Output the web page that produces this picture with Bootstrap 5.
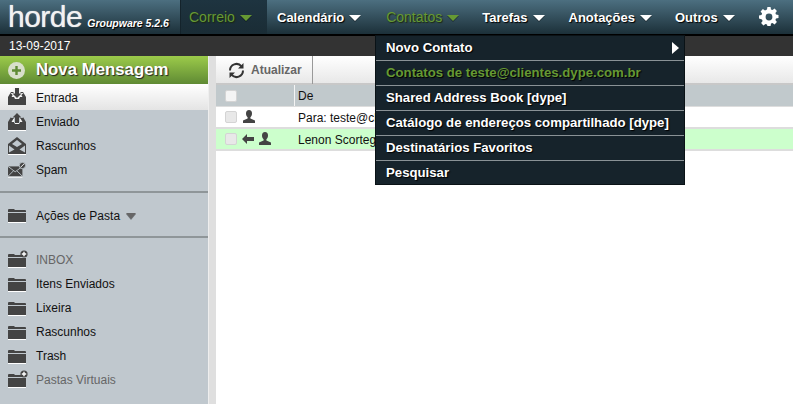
<!DOCTYPE html>
<html lang="pt-BR">
<head>
<meta charset="utf-8">
<title>Horde</title>
<link href="https://cdn.jsdelivr.net/npm/bootstrap@5.3.0/dist/css/bootstrap.min.css" rel="stylesheet">
<style>
html,body{height:404px;overflow:hidden}
body{font-family:"Liberation Sans",Arial,sans-serif;font-size:12px;line-height:1;color:#111;background:#fff;position:relative}
.topbar{height:36px;border-bottom:2px solid #000;background:linear-gradient(#4c6f80,#1c3039)}
.brand{width:180px;height:34px;padding-left:8px}
.brand-word{font-size:30px;font-weight:400;color:#f2f2f2;letter-spacing:-.5px;line-height:34px;height:34px;text-shadow:0 0 1px #ddd}
.brand-ver{font:italic bold 10.5px/11px "Liberation Sans",sans-serif;color:#fff;text-shadow:1px 1px 1px #000;margin:18px 0 0 5px;white-space:nowrap}
.topitem{height:34px;font-size:13px;font-weight:700;color:#fff;text-shadow:1px 1px 1px #000}
.topitem.is-on{color:#669933;text-shadow:1px 1px 1px #1a2a10;font-weight:400;font-size:14px}
.topitem.cur{background:linear-gradient(#1e3440,#1a2c35);width:87px;padding-left:8px;border-left:1px solid #14232b}
.nav-b{margin-left:25px}
.nav-c{margin-left:23px}
.nav-d{margin-left:24px}
.nav-e{margin-left:10px}
.car{width:0;height:0;border-left:6px solid transparent;border-right:6px solid transparent;border-top:6px solid #fff;margin-left:5px;margin-top:1px;filter:drop-shadow(0 1px 0 rgba(0,0,0,.4))}
.is-on .car{border-top-color:#669933}
.car-s{border-top-color:#666;border-left-width:5px;border-right-width:5px;margin-left:-4px}
.gear{margin-left:24px}
.datebar{height:20px;background:#333;color:#fff;padding-left:9px;line-height:20px}
.side{width:208px;height:348px;background:#c0c8ce;flex:none}
.split{width:8px;height:348px;background:#dfdfdf;border-left:1px solid #eee;flex:none}
.compose{height:28px;background:linear-gradient(#9ccb4a,#5f8a34);padding-left:8px;gap:11px;color:#fff;font-size:16.8px;font-weight:700;text-shadow:1px 1px 1px #222}
.sitem{height:24px;padding-left:8px;gap:10px;color:#111}
.sitem.is-cur{height:26px;background:linear-gradient(#fff,#e4e4e4)}
.sitem.is-cur span,.sitem.is-act span{padding-top:1px}
.sitem.is-dim{color:#666}
.ico{width:18px;height:18px;flex:none}
.sline{height:0;border-top:2px solid #8f9699}
.sl-a{margin-top:9px}
.sl-b{margin-top:9px}
.mt-10{margin-top:10px}
.dot{left:20px;top:2px}
.maincol{width:577px;height:348px}
.tools{height:29px;background:linear-gradient(#fff,#e8e8e8);border-bottom:2px solid #c8c8c8}
.refresh{width:97px;height:28px;padding-left:12px;gap:6px;color:#666;font-weight:700;border-right:1px solid #999}
.thead{height:22px;background:#c1c9cc;border-bottom:1px solid #ddd}
.trow{height:22px;border-bottom:2px solid #ddd;background:#fff}
.trow.is-new{background:#ccffcc}
.chk{width:12px;height:12px;background:#e8e8e8;border:1px solid #d4d4d4;border-radius:2px;margin-left:9px;flex:none}
.chk.is-h{background:#f4f4f4}
.cw{width:57px}
.cw-i{padding-left:5px}
.colhead{border-left:1px solid #f4f4f4;height:100%;padding-left:3px;padding-top:1px}
.cell{padding-left:4px;padding-top:2px}
.menu-pop{position:absolute;left:375px;top:35px;width:310px;height:150px;background:#16232b;border:1px solid #0a1216;z-index:5}
.mitem{height:24.500px;padding:0 5px 0 10px;font-size:13.200px;font-weight:700;color:#fff;text-shadow:1px 1px 1px #000;border-bottom:1px solid #8a9296}
.mitem:nth-child(n+2){height:25px}
.mitem:last-child{border-bottom:0}
.mitem.is-on{color:#669933}
.tri{width:0;height:0;border-top:6px solid transparent;border-bottom:6px solid transparent;border-left:7px solid #fff}
</style>
</head>
<body>
<svg width="0" height="0" class="position-absolute">
<defs>
<symbol id="folder" viewBox="0 0 18 18"><path fill="#444" d="M0 4q0-1 1-1h5l1 1h10q1 0 1 1v1H0zM0 7h18v9H0z"/><path fill="#fff" d="M0 16h18v1H0z"/></symbol>
<symbol id="plusdot" viewBox="0 0 8 8"><circle cx="4" cy="4" r="3.600" fill="#444"/><path fill="#fff" d="M3.300 1.800h1.400v1.500h1.500v1.400H4.700v1.500H3.300V4.700H1.800V3.300h1.500z"/></symbol>
<symbol id="person" viewBox="0 0 14 14"><path fill="#444" d="M7 0c2 0 3 1.500 3 3.500 0 1.600-.7 3-1.600 3.700v1.200L13 10.500v2.500H1v-2.500l4.600-2.100V7.200C4.700 6.500 4 5.100 4 3.500 4 1.500 5 0 7 0z"/></symbol>
<symbol id="tray" viewBox="0 0 18 18"><path fill="#444" d="M3 4h12l3 5v8H0V9z"/><path fill="#f2f2f2" d="M3.500 9l2-3.500h7l2 3.500H12l-1 2H7L6 9z"/></symbol>
</defs>
</svg>

<div class="topbar d-flex align-items-center">
  <div class="brand d-flex"><span class="brand-word">horde</span><span class="brand-ver">Groupware 5.2.6</span></div>
  <div class="topitem cur d-flex align-items-center is-on">Correio<i class="car"></i></div>
  <div class="topitem d-flex align-items-center nav-e">Calendário<i class="car"></i></div>
  <div class="topitem d-flex align-items-center is-on nav-b">Contatos<i class="car"></i></div>
  <div class="topitem d-flex align-items-center nav-c">Tarefas<i class="car"></i></div>
  <div class="topitem d-flex align-items-center nav-d">Anotações<i class="car"></i></div>
  <div class="topitem d-flex align-items-center nav-c">Outros<i class="car"></i></div>
  <svg class="gear" width="20" height="20" viewBox="0 0 20 20"><path fill="#fff" fill-rule="evenodd" d="M8.400 0h3.200l.4 2.500 1.500.6 2.100-1.500 2.300 2.300-1.500 2.100.6 1.500 2.500.4v3.200l-2.500.4-.6 1.500 1.500 2.100-2.300 2.300-2.100-1.500-1.500.6-.4 2.500H8.400L8 17.500l-1.500-.6-2.100 1.500-2.300-2.300 1.500-2.100-.6-1.500L0 11.600V8.400l2.500-.4.6-1.500-1.500-2.100 2.300-2.300 2.100 1.500L8 2.500zM10 6.600a3.400 3.400 0 1 0 0 6.800 3.400 3.400 0 0 0 0-6.800z"/></svg>
</div>
<div class="datebar">13-09-2017</div>
<div class="d-flex">
  <div class="side">
    <div class="compose d-flex align-items-center">
      <svg width="17" height="17" viewBox="0 0 17 17"><circle cx="8.500" cy="8.500" r="8.500" fill="#d8dfca"/><path fill="#5f8a34" d="M7.300 4h2.400v3.300H13v2.400H9.700V13H7.300V9.700H4V7.300h3.300z"/></svg>Nova Mensagem
    </div>
    <div class="sitem is-cur d-flex align-items-center"><svg class="ico" viewBox="0 0 18 18"><use href="#tray"/><path fill="#f2f2f2" d="M5.500 0h7v5h3L9 11 2.500 5h3z"/><path fill="#444" d="M7 0h4v5.500h2.500L9 10 4.500 5.500H7z"/></svg><span>Entrada</span></div>
    <div class="sitem d-flex align-items-center"><svg class="ico" viewBox="0 0 18 18"><use href="#tray"/><path fill="#c0c8ce" d="M9 -1l6.500 6H12v5H6V5H2.500z"/><path fill="#444" d="M9 0l4.500 4.500H11V10H7V4.500H4.500z"/><path fill="#fff" d="M0 17h18v1H0z"/></svg><span>Enviado</span></div>
    <div class="sitem d-flex align-items-center"><svg class="ico" viewBox="0 0 18 18"><path fill="#444" d="M9 0l9 7v10H0V7z"/><path fill="#c0c8ce" d="M4 7l5-4 5 4-5 3zM1 8.500l5.500 4L1 15.500zM17 8.500l-5.500 4 5.500 3z"/><path fill="#fff" d="M0 17h18v1H0z"/></svg><span>Rascunhos</span></div>
    <div class="sitem d-flex align-items-center"><svg class="ico" viewBox="0 0 20 18"><path fill="#444" d="M0 5h16v11H0z"/><path fill="none" stroke="#c0c8ce" d="M0 5l8 6 8-6M0 16l6-6M16 16l-6-6"/><circle cx="16" cy="4" r="3.500" fill="#444" stroke="#c0c8ce"/><path stroke="#fff" d="M14 6l4-4"/><path fill="#fff" d="M0 16.500h16v1H0z"/></svg><span>Spam</span></div>
    <div class="sline sl-a"></div>
    <div class="sitem is-act d-flex align-items-center mt-10"><svg class="ico"><use href="#folder"/></svg><span>Ações de Pasta</span><i class="car car-s"></i></div>
    <div class="sline sl-b"></div>
    <div class="sitem is-dim d-flex align-items-center position-relative mt-10"><svg class="ico"><use href="#folder"/></svg><svg class="position-absolute dot" width="8" height="8"><use href="#plusdot"/></svg><span>INBOX</span></div>
    <div class="sitem d-flex align-items-center"><svg class="ico"><use href="#folder"/></svg><span>Itens Enviados</span></div>
    <div class="sitem d-flex align-items-center"><svg class="ico"><use href="#folder"/></svg><span>Lixeira</span></div>
    <div class="sitem d-flex align-items-center"><svg class="ico"><use href="#folder"/></svg><span>Rascunhos</span></div>
    <div class="sitem d-flex align-items-center"><svg class="ico"><use href="#folder"/></svg><span>Trash</span></div>
    <div class="sitem is-dim d-flex align-items-center position-relative"><svg class="ico"><use href="#folder"/></svg><svg class="position-absolute dot" width="8" height="8"><use href="#plusdot"/></svg><span>Pastas Virtuais</span></div>
  </div>
  <div class="split"></div>
  <div class="maincol">
    <div class="tools d-flex">
      <div class="refresh d-flex align-items-center">
        <svg width="17" height="17" viewBox="0 0 17 17"><path fill="none" stroke="#333" stroke-width="2" d="M2 8.500A6.500 6.500 0 0 1 13.500 4.300M15 8.500A6.500 6.500 0 0 1 3.500 12.700"/><path fill="#333" d="M15.500 1v5.500H10zM1.500 16v-5.500H7z"/></svg>Atualizar
      </div>
    </div>
    <div class="thead d-flex align-items-center">
      <i class="chk is-h"></i>
      <div class="cw"></div>
      <div class="colhead d-flex align-items-center">De</div>
    </div>
    <div class="trow d-flex align-items-center">
      <i class="chk"></i>
      <div class="cw cw-i d-flex align-items-center"><svg width="14" height="14"><use href="#person"/></svg></div>
      <div class="cell">Para: teste@clientes.dype.com.br</div>
    </div>
    <div class="trow is-new d-flex align-items-center">
      <i class="chk"></i>
      <div class="cw cw-i d-flex align-items-center gap-1"><svg width="12" height="10" viewBox="0 0 12 10"><path fill="#444" d="M0 5l5-5v3h7v4H5v3z"/></svg><svg width="14" height="14"><use href="#person"/></svg></div>
      <div class="cell">Lenon Scortegagna</div>
    </div>
  </div>
</div>

<div class="menu-pop">
  <div class="mitem d-flex align-items-center justify-content-between">Novo Contato<i class="tri"></i></div>
  <div class="mitem is-on d-flex align-items-center">Contatos de teste@clientes.dype.com.br</div>
  <div class="mitem d-flex align-items-center">Shared Address Book [dype]</div>
  <div class="mitem d-flex align-items-center">Catálogo de endereços compartilhado [dype]</div>
  <div class="mitem d-flex align-items-center">Destinatários Favoritos</div>
  <div class="mitem d-flex align-items-center">Pesquisar</div>
</div>
<script src="https://cdn.jsdelivr.net/npm/bootstrap@5.3.0/dist/js/bootstrap.bundle.min.js"></script>
</body>
</html>
